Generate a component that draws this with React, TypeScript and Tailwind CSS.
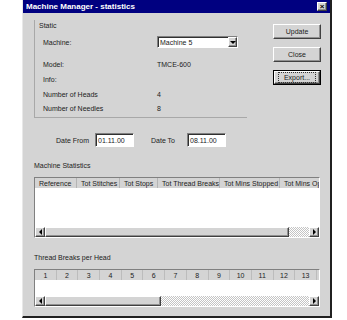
import React from 'react';

const FONT = { fontFamily: '"Liberation Sans", Arial, sans-serif' };

const STAT_COLS = [
  { label: 'Reference', w: 'w-[42px]' },
  { label: 'Tot Stitches', w: 'w-[43px]' },
  { label: 'Tot Stops', w: 'w-[38px]' },
  { label: 'Tot Thread Breaks', w: 'w-[62px]' },
  { label: 'Tot Mins Stopped', w: 'w-[60px]' },
  { label: 'Tot Mins Operating', w: 'w-[60px]' },
];

const HEADS = Array.from({ length: 13 }, (_, i) => i + 1);

function Raised({ className = '', children }: { className?: string; children?: React.ReactNode }) {
  return (
    <div
      className={`border border-t-white border-l-white border-r-[#404040] border-b-[#404040] bg-[#d4d4d4] shadow-[inset_-1px_-1px_0_#909090] ${className}`}
    >
      {children}
    </div>
  );
}

function Sunken({ className = '', children }: { className?: string; children?: React.ReactNode }) {
  return (
    <div
      className={`border border-t-[#808080] border-l-[#808080] border-r-white border-b-white bg-white shadow-[inset_1px_1px_0_#303030] ${className}`}
    >
      {children}
    </div>
  );
}

function Arrow({ dir }: { dir: 'left' | 'right' | 'down' }) {
  const shape =
    dir === 'left'
      ? 'border-y-[3px] border-y-transparent border-r-[3px] border-r-black'
      : dir === 'right'
        ? 'border-y-[3px] border-y-transparent border-l-[3px] border-l-black'
        : 'border-x-[3px] border-x-transparent border-t-[3px] border-t-black';
  return <span className={`h-0 w-0 ${shape}`} />;
}

function ScrollBar({ thumb }: { thumb: string }) {
  return (
    <div className="flex h-[10px] bg-[#d4d4d4]">
      <Raised className="flex h-[10px] w-[10px] items-center justify-center">
        <Arrow dir="left" />
      </Raised>
      <Raised className={`h-[10px] ${thumb}`} />
      <div className="h-[10px] flex-1 bg-[repeating-conic-gradient(#ffffff_0_25%,#c4c4c4_0_50%)] bg-[length:2px_2px]" />
      <Raised className="flex h-[10px] w-[10px] items-center justify-center">
        <Arrow dir="right" />
      </Raised>
    </div>
  );
}

function Row({ label, value, className = '' }: { label: string; value?: string; className?: string }) {
  return (
    <div className={`flex h-[10px] items-center pl-[8px] ${className}`}>
      <span className="w-[114px]">{label}</span>
      <span>{value}</span>
    </div>
  );
}

export default function App() {
  return (
    <div className="h-[320px] w-[347px] bg-white pl-[22px] text-[7px] leading-none text-[#222]" style={FONT}>
      <div className="flex h-[318px] w-[310px] flex-col border-l border-r-2 border-b-2 border-l-[#e8e8e8] border-r-[#202020] border-b-[#202020] bg-[#d4d4d4]">
        {/* title bar */}
        <div className="flex h-[13px] items-center justify-between bg-[#000080] pl-[3px] pr-[3px]">
          <span className="text-[8px] font-bold text-white">Machine Manager - statistics</span>
          <Raised className="flex h-[9px] w-[10px] items-center justify-center text-[8px] font-bold leading-none text-black">
            ×
          </Raised>
        </div>

        {/* top section */}
        <div className="flex pl-[11px]">
          <div className="mt-[7px] h-[98px] w-[213px] border-l border-b border-l-[#a8a8a8] border-b-[#a8a8a8]">
            <div className="flex h-[10px] items-center pl-[4px]">Static</div>
            <div className="mt-[6px] flex h-[12px] items-center pl-[8px]">
              <span className="w-[114px]">Machine:</span>
              <Sunken className="flex h-[12px] w-[81px] items-center justify-between pl-[2px]">
                <span>Machine 5</span>
                <Raised className="flex h-[10px] w-[9px] items-center justify-center">
                  <Arrow dir="down" />
                </Raised>
              </Sunken>
            </div>
            <Row label="Model:" value="TMCE-600" className="mt-[11px]" />
            <Row label="Info:" className="mt-[5px]" />
            <Row label="Number of Heads" value="4" className="mt-[5px]" />
            <Row label="Number of Needles" value="8" className="mt-[4px]" />
          </div>

          <div className="ml-[26px] mt-[11px] flex flex-col gap-[8px]">
            <Raised className="flex h-[15px] w-[48px] items-center justify-center">Update</Raised>
            <Raised className="flex h-[15px] w-[48px] items-center justify-center">Close</Raised>
            <div className="h-[15px] w-[48px] border border-black">
              <Raised className="flex h-[13px] w-[46px] items-center justify-center">
                <span className="border border-dotted border-[#333] px-[5px] py-[1px]">Export...</span>
              </Raised>
            </div>
          </div>
        </div>

        {/* dates */}
        <div className="mt-[15px] flex h-[14px] items-center pl-[33px]">
          <span className="w-[39px]">Date From</span>
          <Sunken className="flex h-[14px] w-[39px] items-center pl-[2px]">01.11.00</Sunken>
          <span className="ml-[17px] w-[36px]">Date To</span>
          <Sunken className="flex h-[14px] w-[39px] items-center pl-[2px]">08.11.00</Sunken>
        </div>

        {/* machine statistics */}
        <div className="mt-[13px] flex h-[10px] items-center pl-[11px]">Machine Statistics</div>
        <div className="ml-[11px] mt-[7px] w-[286px]">
          <Sunken className="flex h-[61px] flex-col overflow-hidden">
            <div className="flex h-[10px] shrink-0 bg-[#d4d4d4]">
              {STAT_COLS.map((c) => (
                <div
                  key={c.label}
                  className={`${c.w} flex shrink-0 items-center overflow-hidden whitespace-nowrap border-r border-r-[#b4b4b4] pl-[4px]`}
                >
                  {c.label}
                </div>
              ))}
            </div>
            <div className="flex-1 bg-white" />
            <ScrollBar thumb="w-[244px]" />
          </Sunken>
        </div>

        {/* thread breaks */}
        <div className="mt-[14px] flex h-[10px] items-center pl-[11px]">Thread Breaks per Head</div>
        <div className="ml-[11px] mt-[7px] w-[286px]">
          <Sunken className="flex h-[38px] flex-col overflow-hidden">
            <div className="flex h-[10px] shrink-0 bg-[#d4d4d4]">
              {HEADS.map((n) => (
                <div
                  key={n}
                  className="flex w-[21.7px] shrink-0 items-center justify-center border-r border-r-[#bcbcbc]"
                >
                  {n}
                </div>
              ))}
            </div>
            <div className="flex-1 bg-white" />
            <ScrollBar thumb="w-[116px]" />
          </Sunken>
        </div>
      </div>
    </div>
  );
}
